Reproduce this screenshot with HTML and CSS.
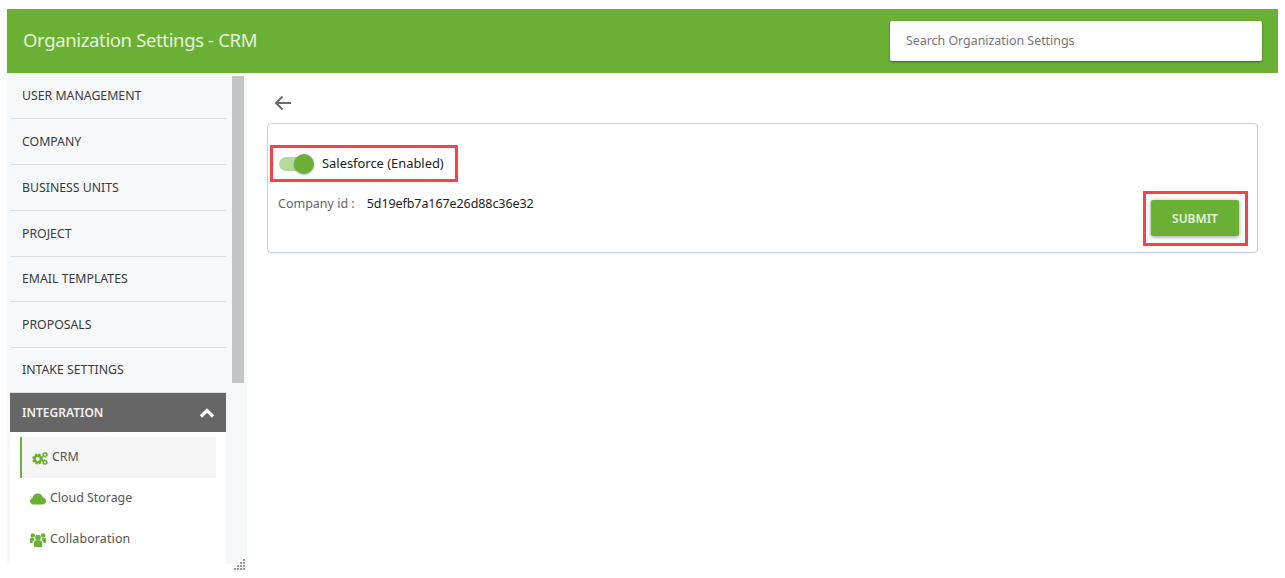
FILE: index.html
```html
<!DOCTYPE html>
<html lang="en">
<head>
<meta charset="utf-8">
<title>Organization Settings - CRM</title>
<link rel="stylesheet" href="styles.css">
</head>
<body>
<header class="topbar">
  <h1 class="title">Organization Settings - CRM</h1>
  <input class="search" type="text" placeholder="Search Organization Settings">
</header>
<div class="main">
  <aside class="sidebar">
    <nav class="menu">
      <a class="menu-item">USER MANAGEMENT</a>
      <a class="menu-item">COMPANY</a>
      <a class="menu-item">BUSINESS UNITS</a>
      <a class="menu-item">PROJECT</a>
      <a class="menu-item short">EMAIL TEMPLATES</a>
      <a class="menu-item">PROPOSALS</a>
      <a class="menu-item short">INTAKE SETTINGS</a>
      <a class="menu-head">INTEGRATION
        <svg class="chev" width="16" height="10" viewBox="0 0 16 10"><path d="M2 8.500 L8 2.500 L14 8.500" fill="none" stroke="#fff" stroke-width="3.200"/></svg>
      </a>
      <div class="submenu">
        <a class="sub-item active">
          <svg class="ico" width="16" height="13" viewBox="0 0 16 13"><g fill="none" stroke="#6ab035"><circle cx="5.800" cy="7" r="3.200" stroke-width="2.600"/><circle cx="5.800" cy="7" r="4.800" stroke-width="1.600" stroke-dasharray="2.300 1.470"/><circle cx="13" cy="2.700" r="1.700" stroke-width="1.500"/><circle cx="13" cy="2.700" r="2.600" stroke-width="1" stroke-dasharray="1.200 1.520"/><circle cx="13" cy="10.300" r="1.700" stroke-width="1.500"/><circle cx="13" cy="10.300" r="2.600" stroke-width="1" stroke-dasharray="1.200 1.520"/></g></svg>
          <span>CRM</span>
        </a>
        <a class="sub-item">
          <svg class="ico" width="16" height="12" viewBox="0 0 16 12"><path fill="#6ab035" d="M3.500 11.500C1.500 11.500 0 10.100 0 8.300 0 6.800 1 5.600 2.400 5.200 2.700 2.400 5 .5 7.800.5c2.400 0 4.400 1.500 5 3.700 1.900.4 3.200 2 3.200 3.800 0 2-1.600 3.500-3.700 3.500z"/></svg>
          <span>Cloud Storage</span>
        </a>
        <a class="sub-item">
          <svg class="ico" width="16" height="14" viewBox="0 0 16 14"><g fill="#6ab035"><circle cx="2.800" cy="2.400" r="2.200"/><circle cx="13.200" cy="2.400" r="2.200"/><path d="M0 6.200c0-1 .6-1.500 1.400-1.500h2.500c-.1 1-.1 1.700.5 2.500-1.200.5-1.900 1.300-2 2.800H1c-.6 0-1-.4-1-1zM16 6.200c0-1-.6-1.500-1.400-1.500h-2.500c.1 1 .1 1.700-.5 2.500 1.200.5 1.900 1.300 2 2.800H15c.6 0 1-.4 1-1z"/><circle cx="8" cy="4.600" r="2.900"/><path d="M3.800 9.800c0-1.700 1-2.600 2.200-2.600h4c1.200 0 2.200.9 2.200 2.600V13c0 .6-.4 1-1 1H4.800c-.6 0-1-.4-1-1z"/></g></svg>
          <span class="wide">Collaboration</span>
        </a>
      </div>
    </nav>
    <div class="scrolltrack"><div class="scrollthumb"></div></div>
    <svg class="grip" width="12" height="12" viewBox="0 0 12 12"><g fill="#9a9a9a"><rect x="9" y="0" width="2" height="2"/><rect x="6" y="3" width="2" height="2"/><rect x="9" y="3" width="2" height="2"/><rect x="3" y="6" width="2" height="2"/><rect x="6" y="6" width="2" height="2"/><rect x="9" y="6" width="2" height="2"/><rect x="0" y="9" width="2" height="2"/><rect x="3" y="9" width="2" height="2"/><rect x="6" y="9" width="2" height="2"/><rect x="9" y="9" width="2" height="2"/></g></svg>
  </aside>
  <main class="content">
    <svg class="back" width="18" height="16" viewBox="0 0 18 16"><path d="M17 8H2M8.500 1.500 2 8l6.500 6.500" fill="none" stroke="#6a6a6a" stroke-width="1.900"/></svg>
    <section class="card">
      <div class="card-left">
        <div class="toggle-row">
          <span class="toggle"><span class="knob"></span></span>
          <span class="toggle-label">Salesforce (Enabled)</span>
        </div>
        <div class="id-row">
          <span class="id-label">Company id :</span>
          <span class="id-value">5d19efb7a167e26d88c36e32</span>
        </div>
      </div>
      <div class="submit-box"><button class="submit" type="button">SUBMIT</button></div>
    </section>
  </main>
</div>
</body>
</html>
```
FILE: styles.css
```css
* { box-sizing: border-box; }
html, body { margin: 0; height: 100%; background: #fff; overflow: hidden; }
body { padding: 9px 7px 0; font-family: "Noto Sans", "Open Sans", sans-serif; color: #333; }
.topbar { height: 64px; background: #6ab035; display: flex; align-items: center; justify-content: space-between; padding: 0 16px; }
.title { margin: 0 0 4px; font-size: 18.500px; font-weight: 400; letter-spacing: -.36px; color: #e6f3da; }
.search { width: 372px; height: 40px; border: 0; border-radius: 2px; background: #fff; padding: 0 16px 2px; font: 12.400px "Noto Sans", sans-serif; box-shadow: 0 1px 2px rgba(0,0,0,.45); outline: 0; }
.search::placeholder { color: #757575; opacity: 1; }
.main { display: flex; }
.sidebar { position: relative; width: 240px; height: 491px; background: #f7f8fa; padding-left: 3px; flex: none; }
.menu { width: 216px; display: flex; flex-direction: column; height: 100%; overflow: hidden; }
.menu-item { height: 46px; flex: none; display: flex; align-items: center; padding-left: 12px; border-bottom: 1px solid #dcdfe3; font-size: 12.300px; color: #3a3a3a; }
.menu-item.short { height: 45px; padding-bottom: 1px; }
.menu-head { height: 39px; flex: none; display: flex; align-items: center; justify-content: space-between; padding: 0 11px 0 12px; background: #666; color: #f2f2f2; font-size: 12px; font-weight: 600; }
.submenu { flex: 1; background: #fff; padding: 5px 10px 0; display: flex; flex-direction: column; }
.sub-item { height: 41px; flex: none; display: flex; align-items: center; gap: 4px; padding-left: 10px; font-size: 12.400px; color: #555; padding-bottom: 2px; }
.sub-item.active { background: #f5f5f5; border-left: 2px solid #6ab035; padding-left: 10px; }
.sub-item .ico { flex: none; margin-top: 3px; }
.wide { letter-spacing: .15px; }
.scrolltrack { position: absolute; left: 225px; top: 3px; width: 12px; height: 307px; }
.scrollthumb { width: 100%; height: 100%; background: #c4c5c7; }
.grip { position: absolute; right: 1px; bottom: -7px; }
.content { flex: 1; padding: 22px 20px 0 20px; }
.back { display: block; margin-left: 7px; }
.card { margin-top: 12px; height: 130px; border: 1px solid #c5d0d8; border-radius: 4px; display: flex; justify-content: space-between; box-shadow: 0 1px 1px rgba(0,0,0,.05); }
.card-left { padding: 21px 0 0 2px; }
.toggle-row { width: 188px; height: 37px; border: 3px solid #f24548; display: flex; align-items: center; padding-left: 6px; gap: 9px; }
.toggle { position: relative; display: block; width: 34px; height: 14px; border-radius: 7px; background: #b5d89b; }
.knob { position: absolute; right: -1px; top: -3px; width: 20px; height: 20px; border-radius: 50%; background: #6ab035; box-shadow: 0 1px 2px rgba(0,0,0,.3); }
.toggle-label { font-size: 12.900px; color: #222; padding-bottom: 2px; }
.id-row { margin: 13px 0 0 8px; font-size: 12.500px; display: flex; gap: 12px; }
.id-label { color: #666; }
.id-value { color: #222; letter-spacing: -.08px; }
.submit-box { align-self: flex-end; width: 105px; height: 55px; margin: 0 9px 6px 0; border: 3px solid #f24548; padding: 6px 0 0 5px; }
.submit { display: block; width: 88px; height: 36px; border: 0; border-radius: 2px; background: #6ab035; color: #e6f3da; font: 600 12px "Noto Sans", sans-serif; box-shadow: 0 1px 4px rgba(0,0,0,.4); }
```
